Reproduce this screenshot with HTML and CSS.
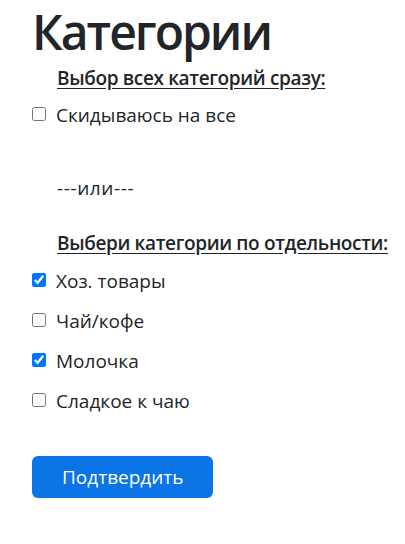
FILE: index.html
```html
<!DOCTYPE html>
<html lang="ru">
<head>
<meta charset="utf-8">
<link rel="stylesheet" href="styles.css">
</head>
<body>
<main class="page">
  <h1 class="title">Категории</h1>
  <div class="section-title first">Выбор всех категорий сразу:</div>
  <label class="option first-opt"><input type="checkbox" class="check"><span>Скидываюсь на все</span></label>
  <div class="or">---или---</div>
  <div class="section-title second">Выбери категории по отдельности:</div>
  <div class="options">
    <label class="option"><input type="checkbox" class="check" checked><span>Хоз. товары</span></label>
    <label class="option"><input type="checkbox" class="check"><span>Чай/кофе</span></label>
    <label class="option"><input type="checkbox" class="check" checked><span>Молочка</span></label>
    <label class="option"><input type="checkbox" class="check"><span>Сладкое к чаю</span></label>
  </div>
  <button class="submit" type="button">Подтвердить</button>
</main>
</body>
</html>
```
FILE: styles.css
```css
html, body {
  margin: 0;
  padding: 0;
  background: #ffffff;
}
.page {
  padding-left: 32px;
  font-family: "Open Sans", "Noto Sans", sans-serif;
  font-size: 19px;
  line-height: 27px;
  color: #212529;
  display: flex;
  flex-direction: column;
  align-items: flex-start;
}
.title {
  margin: 0;
  font-size: 48px;
  line-height: 63px;
  font-weight: 600;
  letter-spacing: -2px;
  padding-right: 4px;
}
.section-title {
  margin-left: 25px;
  font-weight: 600;
  letter-spacing: -0.35px;
  text-decoration: underline;
  text-underline-offset: 3px;
}
.section-title.first { margin-top: 2px; }
.section-title.second { margin-top: 28px; }
.option {
  display: flex;
  align-items: center;
  gap: 10px;
}
.first-opt { margin-top: 10px; }
.check {
  margin: 0 0 3px 0;
  width: 14px;
  height: 14px;
}
.or {
  margin-left: 25px;
  margin-top: 46px;
  letter-spacing: 0.6px;
}
.options {
  margin-top: 11px;
  display: flex;
  flex-direction: column;
  gap: 13px;
}
.submit {
  margin-top: 41px;
  height: 42px;
  padding: 0 30px;
  border: none;
  border-radius: 6px;
  background: #0b74e6;
  color: #ffffff;
  font-family: "Open Sans", "Noto Sans", sans-serif;
  font-size: 19px;
}
```
